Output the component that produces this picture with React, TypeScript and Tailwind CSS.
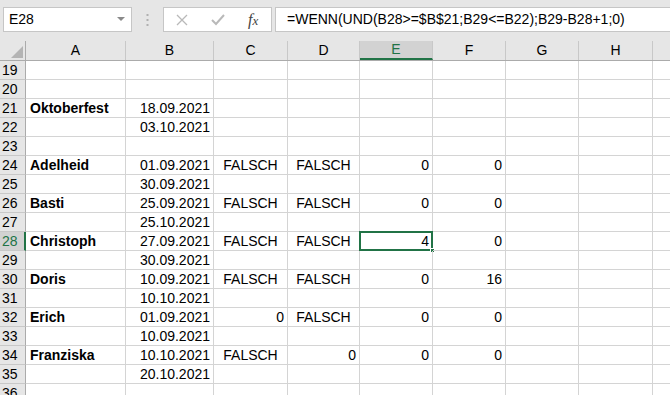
import React from "react";

const COLS = [
  { key: "A", w: "w-[100px]" },
  { key: "B", w: "w-[88px]" },
  { key: "C", w: "w-[74px]" },
  { key: "D", w: "w-[72px]" },
  { key: "E", w: "w-[73px]" },
  { key: "F", w: "w-[73px]" },
  { key: "G", w: "w-[73px]" },
  { key: "H", w: "w-[74px]" },
];

type Cell = { v: string; align?: "l" | "c" | "r"; bold?: boolean };
type Row = { n: number; cells: Record<string, Cell> };

const F: Cell = { v: "FALSCH", align: "c" };
const num = (v: string): Cell => ({ v, align: "r" });
const name = (v: string): Cell => ({ v, bold: true });

const rows: Row[] = [
  { n: 19, cells: {} },
  { n: 20, cells: {} },
  { n: 21, cells: { A: name("Oktoberfest"), B: num("18.09.2021") } },
  { n: 22, cells: { B: num("03.10.2021") } },
  { n: 23, cells: {} },
  { n: 24, cells: { A: name("Adelheid"), B: num("01.09.2021"), C: F, D: F, E: num("0"), F: num("0") } },
  { n: 25, cells: { B: num("30.09.2021") } },
  { n: 26, cells: { A: name("Basti"), B: num("25.09.2021"), C: F, D: F, E: num("0"), F: num("0") } },
  { n: 27, cells: { B: num("25.10.2021") } },
  { n: 28, cells: { A: name("Christoph"), B: num("27.09.2021"), C: F, D: F, E: num("4"), F: num("0") } },
  { n: 29, cells: { B: num("30.09.2021") } },
  { n: 30, cells: { A: name("Doris"), B: num("10.09.2021"), C: F, D: F, E: num("0"), F: num("16") } },
  { n: 31, cells: { B: num("10.10.2021") } },
  { n: 32, cells: { A: name("Erich"), B: num("01.09.2021"), C: num("0"), D: F, E: num("0"), F: num("0") } },
  { n: 33, cells: { B: num("10.09.2021") } },
  { n: 34, cells: { A: name("Franziska"), B: num("10.10.2021"), C: F, D: num("0"), E: num("0"), F: num("0") } },
  { n: 35, cells: { B: num("20.10.2021") } },
  { n: 36, cells: {} },
];

function FormulaBar() {
  return (
    <div className="h-[41px] bg-[#e6e6e6] flex items-start pt-[7px] pl-[3px] shrink-0">
      {/* Namenfeld */}
      <div className="w-[129px] h-[25px] bg-white border border-[#c6c6c6] flex items-center justify-between pl-[5px] pr-[6px]">
        <span className="text-[14px]">E28</span>
        <svg width="8" height="5" viewBox="0 0 8 5">
          <path d="M0 0 L8 0 L4 4 Z" fill="#8a8a8a" />
        </svg>
      </div>
      <div className="w-[31px] h-[25px] flex items-center justify-center">
        <svg width="3" height="12" viewBox="0 0 3 12">
          <rect x="0.5" y="0" width="2" height="2" fill="#b0b0b0" />
          <rect x="0.5" y="5" width="2" height="2" fill="#b0b0b0" />
          <rect x="0.5" y="10" width="2" height="2" fill="#b0b0b0" />
        </svg>
      </div>
      <div className="w-[109px] h-[25px] bg-white border border-[#c6c6c6] flex items-center">
        <div className="w-[36px] flex justify-center">
          <svg width="12" height="12" viewBox="0 0 12 12">
            <path d="M1 1 L11 11 M11 1 L1 11" stroke="#b9b9b9" strokeWidth="1.3" />
          </svg>
        </div>
        <div className="w-[36px] flex justify-center">
          <svg width="14" height="12" viewBox="0 0 14 12">
            <path d="M1 6 L5 10 L13 1" stroke="#b9b9b9" strokeWidth="2" fill="none" />
          </svg>
        </div>
        <div className="w-[36px] flex justify-center">
          <span className="italic text-[16px] text-[#444] font-['Liberation_Serif',serif]">
            f<span className="text-[13px]">x</span>
          </span>
        </div>
      </div>
      <div className="ml-[3px] flex-1 h-[25px] bg-white border border-[#c6c6c6] border-r-0 flex items-center pl-[11px]">
        <span className="text-[14px] whitespace-nowrap">=WENN(UND(B28&gt;=$B$21;B29&lt;=B22);B29-B28+1;0)</span>
      </div>
    </div>
  );
}

function HeaderRow() {
  return (
    <div className="flex h-[20px] bg-[#e6e6e6] border-b border-[#ababab]">
      <div className="w-[26px] shrink-0 border-r border-[#ababab] relative">
        <svg className="absolute right-[2px] bottom-[2px]" width="12" height="12" viewBox="0 0 12 12">
          <path d="M12 0 L12 12 L0 12 Z" fill="#b4b4b4" />
        </svg>
      </div>
      {COLS.map((c) =>
        c.key === "E" ? (
          <div
            key={c.key}
            className={`${c.w} shrink-0 bg-[#d2d2d2] text-[#217346] border-r border-[#c8c8c8] border-b-2 border-b-[#217346] flex items-center justify-center text-[14px]`}
          >
            {c.key}
          </div>
        ) : (
          <div
            key={c.key}
            className={`${c.w} shrink-0 border-r border-[#c8c8c8] flex items-center justify-center text-[14px]`}
          >
            {c.key}
          </div>
        )
      )}
      <div className="flex-1" />
    </div>
  );
}

function SheetRow({ row }: { row: Row }) {
  const sel = row.n === 28;
  return (
    <div className="flex h-[19px] shrink-0">
      <div
        className={
          sel
            ? "w-[26px] shrink-0 bg-[#d2d2d2] text-[#217346] border-r-2 border-[#217346] border-b border-b-[#c8c8c8] text-[14px] leading-[18px] pl-[2px]"
            : "w-[26px] shrink-0 bg-[#e6e6e6] border-r border-[#ababab] border-b border-b-[#c8c8c8] text-[14px] leading-[18px] pl-[2px]"
        }
      >
        {row.n}
      </div>
      {COLS.map((c) => {
        const cell = row.cells[c.key];
        const isSel = sel && c.key === "E";
        return (
          <div
            key={c.key}
            className={`${c.w} shrink-0 border-r border-b border-[#d4d4d4] text-[14px] leading-[18px] whitespace-nowrap relative ${
              cell?.align === "r" ? "text-right pr-[3px]" : cell?.align === "c" ? "text-center" : "text-left pl-[4px]"
            } ${cell?.bold ? "font-bold" : ""}`}
          >
            {cell?.v}
            {isSel && (
              <>
                <div className="absolute -left-[1px] -top-[1px] -right-[1px] -bottom-[1px] border-2 border-[#217346]" />
                <div className="absolute -right-[3px] -bottom-[3px] w-[5px] h-[5px] bg-[#217346] border border-white" />
              </>
            )}
          </div>
        );
      })}
      <div className="flex-1 border-b border-[#d4d4d4]" />
    </div>
  );
}

export default function App() {
  return (
    <div className="w-[670px] h-[395px] overflow-hidden bg-white text-black font-['Liberation_Sans',Arial,sans-serif] flex flex-col">
      <FormulaBar />
      <HeaderRow />
      {rows.map((r) => (
        <SheetRow key={r.n} row={r} />
      ))}
    </div>
  );
}
